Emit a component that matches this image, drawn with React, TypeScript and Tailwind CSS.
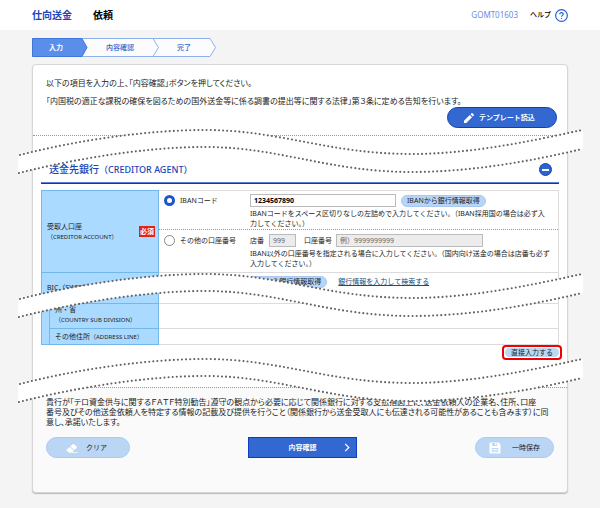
import type { ReactNode } from 'react';

function Wave({ place }: { place: string }) {
  const band = 'M0 28 C60 12 130 2 187 2 C262 2 310 26 394 26 C450 26 510 14 565 2 L565 21 C510 34 450 44 394 44 C310 44 262 19 187 19 C130 19 60 30 0 45 Z';
  return (
    <svg
      aria-hidden="true"
      viewBox="0 0 565 48"
      preserveAspectRatio="none"
      className={`pointer-events-none absolute -left-[15px] h-12 w-[calc(100%+31px)] ${place}`}
    >
      <path d={band} fill="#fff" />
      <g fill="none" stroke="#626262" strokeWidth="2.1" strokeLinecap="round" strokeDasharray="0 4.1">
        <path d="M2 27 C60 12 130 2 187 2 C262 2 310 26 394 26 C450 26 510 14 564 2" />
        <path d="M1 45 C60 30 130 19 187 19 C262 19 310 44 394 44 C450 44 510 34 564 21" />
      </g>
    </svg>
  );
}

function MiniButton({ children }: { children: ReactNode }) {
  return (
    <button type="button" className="h-3 shrink-0 rounded-full border border-[#a9c8f0] bg-[#b9d4f5] px-[5px] text-[7px] leading-[10px] whitespace-nowrap text-[#222]">
      {children}
    </button>
  );
}

const radio =
  'size-[11px] shrink-0 appearance-none rounded-full border border-[#888] bg-white checked:border-[3px] checked:border-[#1f55c4]';

export default function App() {
  return (
    <div
      lang="ja"
      className="min-h-[508px] bg-[#f4f4f4] text-[7px] leading-[10px] text-[#222] [font-family:'Noto_Sans','Noto_Sans_CJK_JP',sans-serif]"
    >
      <header className="flex h-[30px] items-center bg-white px-8">
        <h1 className="text-[10px] font-bold text-[#1a46bd]">仕向送金</h1>
        <span className="ml-[21px] text-[10px] font-bold text-black">依頼</span>
        <span className="ml-auto text-[8px] text-[#6a8ee0]">GOMT01603</span>
        <a href="#help" className="ml-3 flex items-center gap-1 text-[7px] font-medium text-black">
          ヘルプ
          <svg viewBox="0 0 12 12" className="size-[13px]" fill="none" stroke="#2560cf">
            <circle cx="6" cy="6" r="5.4" strokeWidth="1.1" />
            <path d="M4.4 4.8C4.4 2.7 7.7 2.8 7.6 4.8C7.5 5.9 6 5.9 6 7.2M6 8.2V9.2" strokeWidth="1.1" />
          </svg>
        </a>
      </header>

      <main className="px-8 pt-2 pb-4">
        <ol className="relative isolate flex h-[19px] w-[185px] items-center text-center text-[#2f61c6]">
          <svg aria-hidden="true" viewBox="0 0 185 19" className="absolute inset-0 -z-10 h-full w-full">
            <path d="M.5 .5H178L183.500 9.500L178 18.500H.5Z" fill="#fcfcfd" stroke="#8fb0ec" />
            <path d="M121 .5L126.500 9.500L121 18.500" fill="none" stroke="#8fb0ec" />
            <path d="M.5 .5H50L55 9.500L50 18.500H.5Z" fill="#5b8ee8" stroke="#3d76dc" />
          </svg>
          <li aria-current="step" className="w-12 font-bold text-white">入力</li>
          <li className="w-20 font-medium">内容確認</li>
          <li className="w-12 font-medium">完了</li>
        </ol>

        <div className="relative mt-[7px] rounded-sm border border-[#d6d6d6] bg-white shadow-[0_1px_1px_#bbb]">
          <section className="flex h-[71px] flex-col border-b border-dotted border-[#999] px-[13px] pt-[9px]">
            <div className="text-[8px] leading-[18px] [font-feature-settings:'palt']">
              <p>以下の項目を入力の上、「内容確認」ボタンを押してください。</p>
              <p>「内国税の適正な課税の確保を図るための国外送金等に係る調書の提出等に関する法律」第３条に定める告知を行います。</p>
            </div>
            <button type="button" className="-mt-[3px] mr-[-3px] flex h-[21px] w-[110px] shrink-0 items-center gap-1 self-end rounded-full border border-[#0f3eb8] bg-[#3268d0] pl-[15px] font-bold text-white">
              <svg viewBox="0 0 24 24" className="size-3" fill="currentColor">
                <path d="M2 17.500V22h4.500L18 10.500 13.500 6zM21.500 7a1.500 1.500 0 0 0 0-2L19 2.500a1.500 1.500 0 0 0-2 0L15 4.500 19.500 9z" />
              </svg>
              テンプレート読込
            </button>
          </section>

          <section className="px-2 pt-[22px]">
            <div className="flex h-[26px] items-center border-b border-[#0d37ac] px-2 pb-0.5 shadow-[inset_0_-1px_0_#5c7bd0]">
              <h2 className="text-[10px] font-medium text-[#1743b7]">
                送金先銀行<span className="text-[9px]">（CREDITOR AGENT）</span>
              </h2>
              <button type="button" aria-label="閉じる" className="ml-auto -mr-px flex size-[13px] items-center justify-center rounded-full border border-[#1743b7] bg-[#2e63cc]">
                <span className="h-0.5 w-[7px] bg-white" />
              </button>
            </div>

            <table className="mt-[6px] w-full border-separate border-spacing-0 text-left [&_th]:font-normal">
              <tbody>
                <tr>
                  <th scope="row" colSpan={2} className="h-[83px] w-[118px] border border-[#74b8ea] bg-[#aadaff] px-[5px] py-0">
                    <div className="flex items-center justify-between">
                      <div>
                        受取人口座
                        <div className="text-[6px] leading-[10px] whitespace-nowrap">（CREDITOR ACCOUNT）</div>
                      </div>
                      <span className="-mr-0.5 bg-[#dc2419] px-px leading-[11px] font-bold text-white">必須</span>
                    </div>
                  </th>
                  <td className="border-y border-r border-[#dcdcdc] p-0 align-top">
                    <div className="flex h-[39px] gap-[5px] border-b border-dotted border-[#999] pt-[3px] pl-[5px]">
                      <input id="iban" type="radio" name="account" defaultChecked className={`mt-px ${radio}`} />
                      <label htmlFor="iban" className="mt-0.5 w-[65px] shrink-0">IBANコード</label>
                      <div className="min-w-0 flex-1 whitespace-nowrap">
                        <div className="flex items-center gap-[5px]">
                          <input aria-label="IBANコード" defaultValue="1234567890" className="h-[13px] w-[146px] border border-[#bbb] bg-white px-[3px] font-bold text-black" />
                          <MiniButton>IBANから銀行情報取得</MiniButton>
                        </div>
                        <p className="mt-0.5">IBANコードをスペース区切りなしの左詰めで入力してください。（IBAN採用国の場合は必ず入<br />力してください。）</p>
                      </div>
                    </div>
                    <div className="flex h-[42px] gap-[5px] pt-1 pl-[5px]">
                      <input id="other" type="radio" name="account" className={`mt-px ${radio}`} />
                      <label htmlFor="other" className="mt-0.5 w-[65px] shrink-0">その他の口座番号</label>
                      <div className="min-w-0 flex-1 whitespace-nowrap">
                        <div className="flex items-center">
                          <label htmlFor="branch">店番</label>
                          <input id="branch" placeholder="999" className="ml-[5px] h-[13px] w-[27px] border border-[#bbb] bg-[#ececec] px-[3px] placeholder:text-[#666]" />
                          <label htmlFor="number" className="ml-2">口座番号</label>
                          <input id="number" placeholder="例）9999999999" className="ml-1 h-[13px] w-[147px] border border-[#bbb] bg-[#ececec] px-[3px] placeholder:text-[#666]" />
                        </div>
                        <p className="mt-0.5">IBAN以外の口座番号を指定される場合に入力してください。（国内向け送金の場合は店番も必ず<br />入力してください。）</p>
                      </div>
                    </div>
                  </td>
                </tr>
                <tr>
                  <th scope="row" colSpan={2} className="h-[30px] border-x border-[#74b8ea] bg-[#aadaff] px-[5px] py-0">BIC（SWIFT）</th>
                  <td className="border-r border-[#dcdcdc] p-0 pt-[3px] pl-[89px] align-top">
                    <div className="flex items-center gap-[11px]">
                      <MiniButton>BICから銀行情報取得</MiniButton>
                      <a href="#search" className="text-[#124e80] underline">銀行情報を入力して検索する</a>
                    </div>
                  </td>
                </tr>
                <tr>
                  <th rowSpan={2} aria-label="住所" className="w-2 border-b border-l border-[#74b8ea] bg-[#aadaff] p-0" />
                  <th scope="row" className="h-[26px] w-[110px] border border-[#74b8ea] bg-[#aadaff] py-0 pr-0 pb-0.5 pl-[5px]">
                    州・省
                    <div className="text-[6px] leading-[10px] whitespace-nowrap">（COUNTRY SUB DIVISION）</div>
                  </th>
                  <td className="border-y border-r border-[#dcdcdc]" />
                </tr>
                <tr>
                  <th scope="row" className="h-4 border-x border-b border-[#74b8ea] bg-[#aadaff] py-0 pr-0 pl-[5px] whitespace-nowrap">
                    その他住所<span className="text-[6px]">（ADDRESS LINE）</span>
                  </th>
                  <td className="border-r border-b border-[#dcdcdc]" />
                </tr>
              </tbody>
            </table>

            <div className="flex h-[42px] items-start justify-end">
              <button type="button" className="-mr-[3px] h-[15px] w-[60px] rounded-[4px] border-2 border-[#f00000] bg-white p-px">
                <span className="block rounded-full bg-[#b9d9f3] leading-[9px] whitespace-nowrap">直接入力する</span>
              </button>
            </div>
          </section>

          <footer className="rounded-b-sm border-t border-dotted border-[#999] bg-[#fafafa] px-[13px] pt-[9px] pb-[34px]">
            <p className="text-[8px] leading-[10px] [font-feature-settings:'palt']">
              貴行が「テロ資金供与に関するＦＡＴＦ特別勧告」遵守の観点から必要に応じて関係銀行に対する支払指図上に、送金依頼人の企業名、住所、口座<br />
              番号及びその他送金依頼人を特定する情報の記載及び提供を行うこと（関係銀行から送金受取人にも伝達される可能性があることも含みます）に同<br />
              意し、承諾いたします。
            </p>
            <div className="mt-[10px] flex justify-between">
              <button type="button" className="flex h-[21px] w-[84px] items-center gap-2 rounded-full border border-[#a9caf3] bg-[#bbd5f5] pl-[19px]">
                <svg viewBox="0 0 24 24" className="size-3" fill="#fff">
                  <path d="M13 4.500a2 2 0 0 1 2.800 0l5.500 4.500a2 2 0 0 1 0 2.800L17 16 8.500 8.800zM7.300 10 15.500 17l-2.500 3H23v1.500H6.500L1.500 17.500a2 2 0 0 1 0-2.500z" />
                </svg>
                クリア
              </button>
              <button type="button" className="relative h-[21px] w-[109px] border border-[#0b3fc0] bg-[#3268d0] font-bold text-white">
                内容確認
                <svg viewBox="0 0 6 10" className="absolute top-[5px] right-1.5 h-[9px] w-[6px]" fill="none" stroke="#fff" strokeWidth="1.4">
                  <path d="M1 1L5 5L1 9" />
                </svg>
              </button>
              <button type="button" className="flex h-[21px] w-[79px] items-center gap-[11px] rounded-full border border-[#a9caf3] bg-[#bbd5f5] pl-[13px]">
                <svg viewBox="0 0 12 12" className="size-3" fill="#fff">
                  <path fillRule="evenodd" d="M1 .5H9.500L11.500 2.500V11A.5 .5 0 0 1 11 11.500H1A.5 .5 0 0 1 .5 11V1A.5 .5 0 0 1 1 .5ZM3.200 1V4H8.200V1H7.500V3H6V1ZM2.800 6V10.300H9.200V6Z" />
                  <path d="M3.500 7H8.500V8H3.500ZM3.500 8.800H8.500V9.600H3.500Z" />
                </svg>
                一時保存
              </button>
            </div>
          </footer>

          <Wave place="top-[63px]" />
          <Wave place="top-[207px]" />
          <Wave place="top-[292px]" />
        </div>
      </main>
    </div>
  );
}
